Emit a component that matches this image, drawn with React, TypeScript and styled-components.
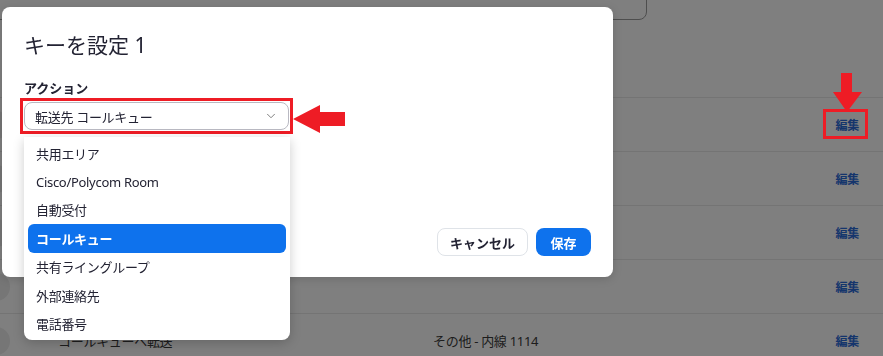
import React from "react";
import styled, { createGlobalStyle } from "styled-components";
import { ChevronDown } from "lucide-react";

const GlobalStyle = createGlobalStyle`
    html, body {
        margin: 0;
        padding: 0;
        overflow: hidden;
    }
    body {
        font-family: "Noto Sans", "Noto Sans CJK JP", sans-serif;
        color: #222;
        background: #fff;
    }
    * {
        box-sizing: border-box;
    }
`;

type KeyRow = { name: string; type: string };

const rows: KeyRow[] = [
    { name: "ユーザー 1101", type: "ユーザー - 内線 1101" },
    { name: "共有エリア", type: "コールキュー - 内線 1102, 1111" },
    { name: "自動受付", type: "自動受付 - 内線 1000" },
    { name: "外部連絡先", type: "" },
    { name: "コールキューへ転送", type: "その他 - 内線 1114" },
];

const options = ["共用エリア", "Cisco/Polycom Room", "自動受付", "コールキュー", "共有ライングループ", "外部連絡先", "電話番号"];

const App = () => {
    return (
        <>
            <GlobalStyle />
            <Page>
                <Header>
                    <Search />
                </Header>
                <Table>
                    {rows.map((r) => (
                        <Row key={r.name}>
                            <Avatar />
                            <Cell>{r.name}</Cell>
                            <Cell>{r.type}</Cell>
                            <EditLink>編集</EditLink>
                        </Row>
                    ))}
                </Table>

                <Overlay />

                <Dialog>
                    <Title>キーを設定 1</Title>
                    <FieldLabel>アクション</FieldLabel>
                    <SelectWrap>
                        <Select>
                            <span>転送先 コールキュー</span>
                            <ChevronDown size={14} color="#777" strokeWidth={1.6} />
                        </Select>
                        <Highlight />
                        <Menu>
                            {options.map((o) => (
                                <MenuItem key={o} $active={o === "コールキュー"}>
                                    {o}
                                </MenuItem>
                            ))}
                        </Menu>
                    </SelectWrap>
                    <Footer>
                        <CancelButton>キャンセル</CancelButton>
                        <SaveButton>保存</SaveButton>
                    </Footer>
                </Dialog>

                <LeftArrow width="54" height="30" viewBox="0 0 54 30">
                    <polygon points="1,15 28,1 28,8 53,8 53,22 28,22 28,29" fill="#ee1c25" />
                </LeftArrow>
                <DownArrow width="31" height="41" viewBox="0 0 31 41">
                    <polygon points="9,1 20,1 20,20 30,20 15,40 1,20 9,20" fill="#ee1c25" />
                </DownArrow>
                <EditMark />
            </Page>
        </>
    );
};

export default App;

const Page = styled.div`
    position: relative;
    width: 883px;
    height: 356px;
    overflow: hidden;
`;

const Header = styled.div`
    height: 97px;
    display: flex;
    padding-right: 236px;
`;

const Search = styled.div`
    flex: 1;
    height: 32px;
    margin: -12px 0 0 -20px;
    border: 1px solid #9c9c9c;
    border-radius: 8px;
`;

const Table = styled.div`
    border-top: 1px solid #e8e8e8;
`;

const Row = styled.div`
    height: 54px;
    border-bottom: 1px solid #e8e8e8;
    display: grid;
    grid-template-columns: 58px 375px 1fr auto;
    align-items: center;
    padding-right: 24px;
    font-size: 13px;
    letter-spacing: -0.3px;
    color: #3a3a3a;
`;

const Avatar = styled.div`
    width: 28px;
    height: 28px;
    margin-left: -18px;
    border-radius: 50%;
    background: #ececec;
`;

const Cell = styled.div`
    white-space: nowrap;
`;

const EditLink = styled.a`
    font-weight: 700;
    font-size: 12px;
    color: #2a6ad8;
`;

const Overlay = styled.div`
    position: fixed;
    inset: 0;
    background: rgba(0, 0, 0, 0.5);
`;

const Dialog = styled.div`
    position: absolute;
    top: 7px;
    left: 2px;
    width: 611px;
    height: 270px;
    background: #fff;
    border-radius: 8px;
    padding: 24px 22px 21px 22px;
    display: flex;
    flex-direction: column;
    box-shadow: 0 2px 10px rgba(0, 0, 0, 0.15);
`;

const Title = styled.div`
    font-size: 21px;
    line-height: 28px;
    font-weight: 400;
    color: #232333;
`;

const FieldLabel = styled.div`
    margin-top: 20px;
    font-size: 13px;
    line-height: 18px;
    font-weight: 700;
    color: #232333;
`;

const SelectWrap = styled.div`
    position: relative;
    margin-top: 5px;
    width: 265px;
`;

const Select = styled.div`
    height: 28px;
    border: 1px solid #b9b9c2;
    border-radius: 8px;
    padding: 0 10px 0 10px;
    display: flex;
    align-items: center;
    justify-content: space-between;
    font-size: 13px;
    letter-spacing: -0.3px;
    color: #232333;
`;

const Highlight = styled.div`
    position: absolute;
    inset: -4px;
    border: 3px solid #ee1c25;
    pointer-events: none;
`;

const Menu = styled.div`
    position: absolute;
    top: 35px;
    left: 0;
    width: 266px;
    padding: 2px 0;
    background: #fff;
    border-radius: 0 0 8px 8px;
    box-shadow: 0 3px 12px rgba(0, 0, 0, 0.2);
    z-index: 2;
`;

const MenuItem = styled.div<{ $active?: boolean }>`
    height: 28.4px;
    margin: 0 4px;
    padding-left: 8px;
    display: flex;
    align-items: center;
    border-radius: 6px;
    font-size: 13px;
    letter-spacing: -0.3px;
    font-weight: ${(p) => (p.$active ? 700 : 400)};
    color: ${(p) => (p.$active ? "#fff" : "#232333")};
    background: ${(p) => (p.$active ? "#0e72ed" : "transparent")};
`;

const Footer = styled.div`
    margin-top: auto;
    display: flex;
    justify-content: flex-end;
    gap: 8px;
`;

const CancelButton = styled.button`
    width: 91px;
    height: 28px;
    border: 1px solid #dfe3e8;
    border-radius: 8px;
    background: #fff;
    font-family: inherit;
    font-size: 13px;
    font-weight: 700;
    color: #232333;
`;

const SaveButton = styled.button`
    width: 55px;
    height: 28px;
    border: none;
    border-radius: 8px;
    background: #0e72ed;
    font-family: inherit;
    font-size: 13px;
    font-weight: 700;
    color: #fff;
`;

const LeftArrow = styled.svg`
    position: absolute;
    left: 292px;
    top: 104px;
`;

const DownArrow = styled.svg`
    position: absolute;
    left: 832px;
    top: 72px;
`;

const EditMark = styled.div`
    position: absolute;
    left: 823px;
    top: 109px;
    width: 45px;
    height: 30px;
    border: 3px solid #ee1c25;
`;
